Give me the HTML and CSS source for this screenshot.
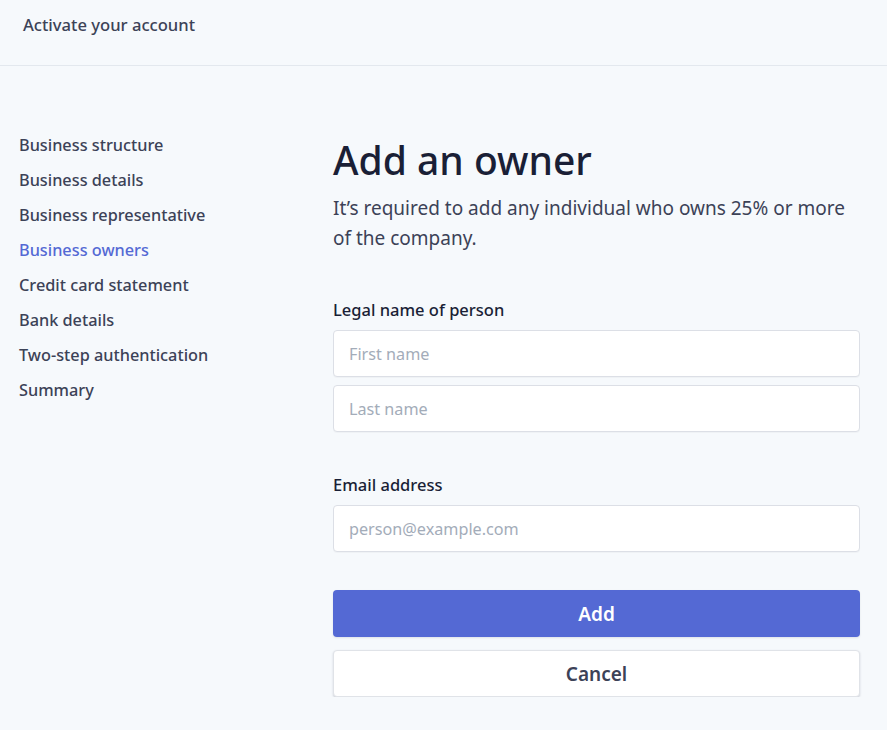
FILE: index.html
```html
<!DOCTYPE html>
<html lang="en">
<head>
<meta charset="utf-8">
<title>Activate your account</title>
<link rel="stylesheet" href="styles.css">
</head>
<body>
<header class="topbar">
  <span class="topbar-title">Activate your account</span>
</header>
<div class="layout">
  <nav class="sidebar">
    <a class="nav-item">Business structure</a>
    <a class="nav-item">Business details</a>
    <a class="nav-item">Business representative</a>
    <a class="nav-item active">Business owners</a>
    <a class="nav-item">Credit card statement</a>
    <a class="nav-item">Bank details</a>
    <a class="nav-item">Two-step authentication</a>
    <a class="nav-item">Summary</a>
  </nav>
  <main class="main">
    <h1 class="title">Add an owner</h1>
    <p class="lead">It’s required to add any individual who owns 25% or more of the company.</p>
    <div class="field">
      <label class="label">Legal name of person</label>
      <input class="input" type="text" placeholder="First name">
      <input class="input" type="text" placeholder="Last name">
    </div>
    <div class="field">
      <label class="label">Email address</label>
      <input class="input" type="email" placeholder="person@example.com">
    </div>
    <div class="actions">
      <button class="btn btn-primary">Add</button>
      <button class="btn btn-secondary">Cancel</button>
    </div>
  </main>
</div>
</body>
</html>
```
FILE: styles.css
```css
* { box-sizing: border-box; }
html, body {
  margin: 0;
  padding: 0;
  background: #f6f9fc;
  font-family: "Noto Sans", "Open Sans", sans-serif;
  color: #3c4257;
}
.topbar {
  height: 66px;
  border-bottom: 1px solid #e3e8ee;
  padding: 13px 23px 0;
}
.topbar-title {
  font-size: 16.6px;
  font-weight: 500;
  color: #3c4257;
  line-height: 24px;
}
.layout {
  display: flex;
  padding: 61px 27px 0 19px;
}
.sidebar {
  width: 314px;
  flex: none;
  display: flex;
  flex-direction: column;
  padding-top: 1px;
}
.nav-item {
  font-size: 16.3px;
  font-weight: 500;
  line-height: 35px;
  color: #3c4257;
  cursor: pointer;
}
.nav-item.active { color: #5469d4; }
.main {
  flex: 1;
  display: flex;
  flex-direction: column;
}
.title {
  margin: 9px 0 0;
  font-size: 39px;
  font-weight: 500;
  line-height: 48px;
  color: #1a1f36;
}
.lead {
  margin: 9px 0 0;
  font-size: 19px;
  line-height: 30px;
  color: #3c4257;
}
.field {
  display: flex;
  flex-direction: column;
  gap: 8px;
  margin-top: 45px;
}
.field + .field { margin-top: 41px; }
.label {
  font-size: 16.5px;
  font-weight: 500;
  color: #1a1f36;
  line-height: 24px;
}
.input {
  height: 47px;
  border: 1px solid #dcdfe6;
  border-radius: 4px;
  background: #fff;
  padding: 0 15px;
  font-family: inherit;
  font-size: 16.2px;
  color: #3c4257;
  box-shadow: 0 1px 1px rgba(0,0,0,0.03);
}
.input::placeholder { color: #a3acb9; }
.actions {
  display: flex;
  flex-direction: column;
  gap: 13px;
  margin-top: 38px;
}
.btn {
  height: 47px;
  border-radius: 4px;
  font-family: inherit;
  font-size: 19px;
  font-weight: 600;
  cursor: pointer;
}
.btn-primary {
  background: #5469d4;
  color: #fff;
  border: none;
  box-shadow: 0 1px 2px rgba(60,66,87,0.12);
}
.btn-secondary {
  background: #fff;
  color: #3c4257;
  border: 1px solid #e0e3e8;
  box-shadow: 0 1px 2px rgba(60,66,87,0.22);
}
```
